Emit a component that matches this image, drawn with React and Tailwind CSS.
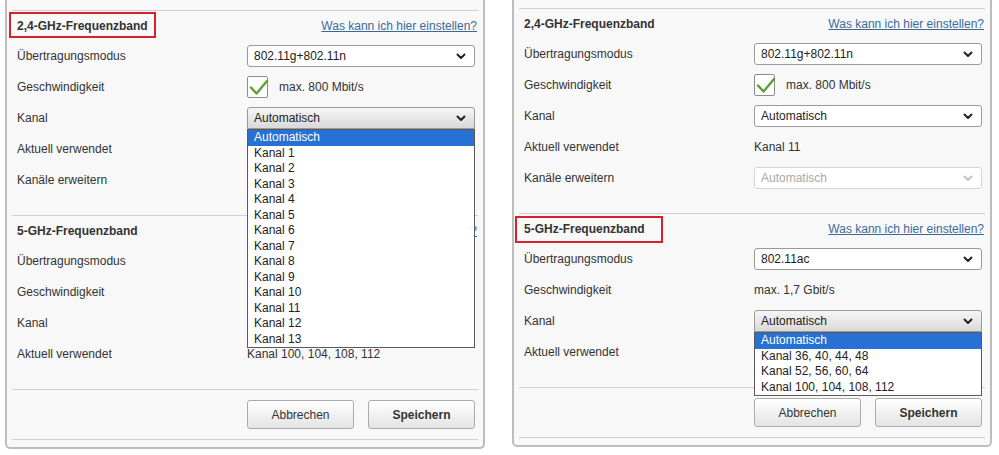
const HELP = 'Was kann ich hier einstellen?';

function Chevron({ className = 'text-[#222]' }) {
  return (
    <svg width="10" height="7" viewBox="0 0 10 7" className={className}>
      <path d="M1.5 1.5 L5 5 L8.5 1.5" fill="none" stroke="currentColor" strokeWidth="2" strokeLinecap="round" strokeLinejoin="round" />
    </svg>
  );
}

function Select({ value, disabled }) {
  return (
    <div
      className={
        'flex h-[22px] items-center justify-between rounded-[3px] border bg-white pl-[6px] pr-[8px] ' +
        (disabled ? 'border-[#d6d6d6] text-[#a8a8a8]' : 'border-[#9a9a9a] text-[#222]')
      }
    >
      <span>{value}</span>
      <Chevron className={disabled ? 'text-[#c4c4c4]' : 'text-[#222]'} />
    </div>
  );
}

function OpenSelect({ value, options }) {
  return (
    <div className="relative">
      <div className="flex h-[22px] items-center justify-between rounded-t-[3px] border border-[#9a9a9a] bg-gradient-to-b from-[#f6f6f6] to-[#d9d9d9] pl-[6px] pr-[8px] text-[#222]">
        <span>{value}</span>
        <Chevron />
      </div>
      <ul className="absolute left-0 top-full z-20 w-full border border-[#5a5a5a] bg-white">
        {options.map((o, i) => (
          <li
            key={o}
            className={
              'h-[15.5px] pl-[6px] leading-[15.5px] ' + (i === 0 ? 'bg-[#2671d3] text-white' : 'text-[#222]')
            }
          >
            {o}
          </li>
        ))}
      </ul>
    </div>
  );
}

function Checkbox() {
  return (
    <div className="flex items-center gap-[11px]">
      <div className="h-[22px] w-[21px] rounded-[2px] border border-[#8c8c8c] bg-white">
        <svg width="21" height="22" viewBox="0 0 21 22">
          <path d="M3 10.5 L8.5 16.5 L19 4" fill="none" stroke="#5b9f3a" strokeWidth="2.4" strokeLinecap="round" strokeLinejoin="round" />
        </svg>
      </div>
      <span className="text-[#333]">max. 800 Mbit/s</span>
    </div>
  );
}

function Row({ label, children }) {
  return (
    <div className="flex h-[31px] items-center pl-[5px] pr-[3px] pt-[1px]">
      <div className="w-[230px] shrink-0 text-[#333]">{label}</div>
      <div className="w-[228px]">{children}</div>
    </div>
  );
}

function Heading({ title, box }) {
  return (
    <div className="flex h-[29px] items-center justify-between pl-[5px] pr-[1px] pt-[1px]">
      <span className="relative font-bold text-[#333]">
        {title}
        {box && <span className={'absolute border-2 border-[#d6222c] ' + box} />}
      </span>
      <a className="text-[#3b6a9a] underline">{HELP}</a>
    </div>
  );
}

function Section({ children }) {
  return <div className="mx-[5px] border-t border-[#d0d0d0] pb-[20px]">{children}</div>;
}

function Buttons() {
  return (
    <div className="mx-[5px] border-y border-[#d0d0d0] pb-[10px] pt-[10px]">
      <div className="flex gap-[14px] pl-[235px]">
        <button className="h-[29px] w-[107px] rounded-[3px] border border-[#ababab] bg-gradient-to-b from-white to-[#e4e4e4] text-[#333]">
          Abbrechen
        </button>
        <button className="h-[29px] w-[107px] rounded-[3px] border border-[#ababab] bg-gradient-to-b from-white to-[#e4e4e4] font-bold text-[#333]">
          Speichern
        </button>
      </div>
    </div>
  );
}

const ch24 = ['Automatisch', ...Array.from({ length: 13 }, (_, i) => `Kanal ${i + 1}`)];
const ch5 = ['Automatisch', 'Kanal 36, 40, 44, 48', 'Kanal 52, 56, 60, 64', 'Kanal 100, 104, 108, 112'];

function Panel({ top, children }) {
  return (
    <div className={'w-[480px] rounded-b-[5px] border-2 border-t-0 border-[#bdbdbd] bg-[#f8f8f8] pb-[7px] ' + top}>
      {children}
    </div>
  );
}

export default function App() {
  return (
    <div className="flex h-[455px] items-start gap-[27px] bg-white pl-[5px] font-['Liberation_Sans',Arial,sans-serif] text-[12px] leading-[14px]">
      <Panel top="pt-[10px]">
        <Section>
          <Heading title="2,4-GHz-Frequenzband" box="-left-[8px] -right-[8px] -top-[7px] -bottom-[5px]" />
          <Row label="Übertragungsmodus"><Select value="802.11g+802.11n" /></Row>
          <Row label="Geschwindigkeit"><Checkbox /></Row>
          <Row label="Kanal"><OpenSelect value="Automatisch" options={ch24} /></Row>
          <Row label="Aktuell verwendet" />
          <Row label="Kanäle erweitern" />
        </Section>
        <Section>
          <Heading title="5-GHz-Frequenzband" />
          <Row label="Übertragungsmodus" />
          <Row label="Geschwindigkeit" />
          <Row label="Kanal" />
          <Row label="Aktuell verwendet"><span className="text-[#333]">Kanal 100, 104, 108, 112</span></Row>
        </Section>
        <Buttons />
      </Panel>

      <Panel top="pt-[8px]">
        <Section>
          <Heading title="2,4-GHz-Frequenzband" />
          <Row label="Übertragungsmodus"><Select value="802.11g+802.11n" /></Row>
          <Row label="Geschwindigkeit"><Checkbox /></Row>
          <Row label="Kanal"><Select value="Automatisch" /></Row>
          <Row label="Aktuell verwendet"><span className="text-[#333]">Kanal 11</span></Row>
          <Row label="Kanäle erweitern"><Select value="Automatisch" disabled /></Row>
        </Section>
        <Section>
          <Heading title="5-GHz-Frequenzband" box="-left-[9px] -right-[18px] -top-[6px] -bottom-[7px]" />
          <Row label="Übertragungsmodus"><Select value="802.11ac" /></Row>
          <Row label="Geschwindigkeit"><span className="text-[#333]">max. 1,7 Gbit/s</span></Row>
          <Row label="Kanal"><OpenSelect value="Automatisch" options={ch5} /></Row>
          <Row label="Aktuell verwendet" />
        </Section>
        <Buttons />
      </Panel>
    </div>
  );
}
